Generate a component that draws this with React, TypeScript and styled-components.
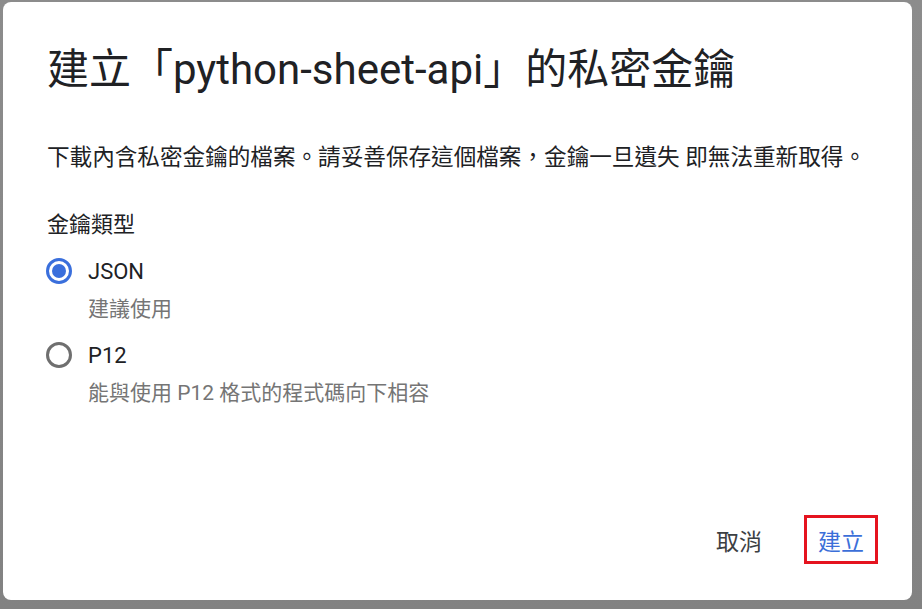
import React, { useState } from 'react'
import styled, { createGlobalStyle } from 'styled-components'

const GlobalStyle = createGlobalStyle`
  html, body {
    margin: 0;
    padding: 0;
    height: 100%;
  }
  body {
    background: linear-gradient(180deg, #8c8c8c 0%, #828282 100%);
    font-family: Roboto, "Noto Sans CJK TC", "Noto Sans", sans-serif;
  }
  #root {
    height: 100%;
  }
`

const Page = styled.div`
  box-sizing: border-box;
  height: 100vh;
  padding: 2px 10px 9px 3px;
  display: flex;
`

const Dialog = styled.div`
  flex: 1;
  display: flex;
  flex-direction: column;
  background: #fff;
  border-radius: 8px;
  padding: 44px 34px 36px 44px;
`

const Title = styled.h1`
  margin: 0;
  font-size: 42px;
  line-height: 48px;
  font-weight: 400;
  color: #202124;
  letter-spacing: 0;
  white-space: nowrap;
`

const Description = styled.p`
  margin: 48px 0 0;
  font-size: 22.6px;
  line-height: 32px;
  color: #202124;
`

const SectionLabel = styled.div`
  margin-top: 35px;
  font-size: 22px;
  line-height: 32px;
  color: #202124;
`

const Options = styled.div`
  display: flex;
  flex-direction: column;
  gap: 16px;
  margin-top: 14px;
`

const Option = styled.label`
  display: flex;
  flex-direction: column;
  cursor: pointer;
`

const OptionRow = styled.div`
  display: flex;
  align-items: center;
  gap: 16px;
  height: 32px;
  margin-left: -1px;
`

const Radio = styled.span<{ checked: boolean }>`
  box-sizing: border-box;
  width: 26px;
  height: 26px;
  border-radius: 50%;
  border: 3px solid ${(p) => (p.checked ? '#3a6fdc' : '#6f6f6f')};
  display: flex;
  align-items: center;
  justify-content: center;

  &::after {
    content: '';
    width: 14px;
    height: 14px;
    border-radius: 50%;
    background: #3a6fdc;
    display: ${(p) => (p.checked ? 'block' : 'none')};
  }
`

const OptionLabel = styled.span`
  font-size: 22px;
  color: #202124;
`

const OptionHint = styled.span`
  margin: 8px 0 0 41px;
  font-size: 21px;
  line-height: 28px;
  color: #757575;
`

const Footer = styled.div`
  margin-top: auto;
  display: flex;
  justify-content: flex-end;
  align-items: center;
  gap: 26px;
`

const Button = styled.button<{ primary?: boolean; marked?: boolean }>`
  box-sizing: border-box;
  height: 49px;
  padding: 0 ${(p) => (p.marked ? 11 : 16)}px;
  background: transparent;
  border: ${(p) => (p.marked ? '3px solid #e5131f' : 'none')};
  font-family: inherit;
  font-size: 23px;
  color: ${(p) => (p.primary ? '#3c6fd9' : '#3c4043')};
  cursor: pointer;
`

const options = [
  { id: 'json', label: 'JSON', hint: '建議使用' },
  { id: 'p12', label: 'P12', hint: '能與使用 P12 格式的程式碼向下相容' },
]

export default function App() {
  const [keyType, setKeyType] = useState('json')

  return (
    <>
      <GlobalStyle />
      <Page>
        <Dialog>
          <Title>建立「python-sheet-api」的私密金鑰</Title>
          <Description>
            下載內含私密金鑰的檔案。請妥善保存這個檔案，金鑰一旦遺失 即無法重新取得。
          </Description>
          <SectionLabel>金鑰類型</SectionLabel>
          <Options>
            {options.map((o) => (
              <Option key={o.id} onClick={() => setKeyType(o.id)}>
                <OptionRow>
                  <Radio checked={keyType === o.id} />
                  <OptionLabel>{o.label}</OptionLabel>
                </OptionRow>
                <OptionHint>{o.hint}</OptionHint>
              </Option>
            ))}
          </Options>
          <Footer>
            <Button>取消</Button>
            <Button primary marked>
              建立
            </Button>
          </Footer>
        </Dialog>
      </Page>
    </>
  )
}
